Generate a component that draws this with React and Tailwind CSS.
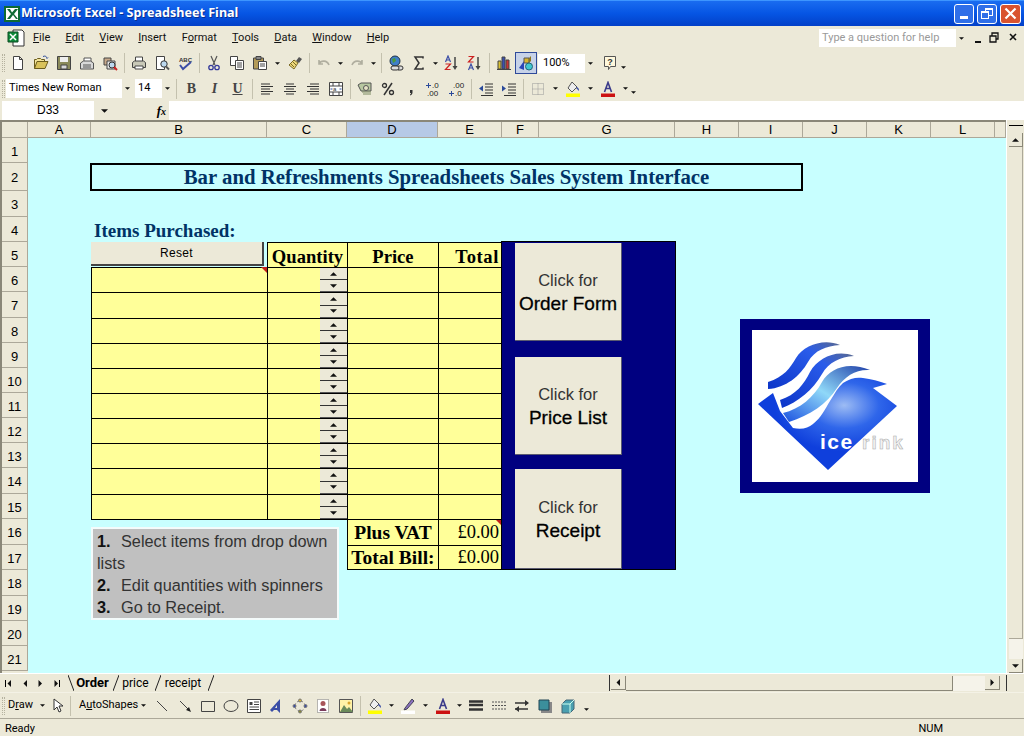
import React from 'react';

const COLS = ['A', 'B', 'C', 'D', 'E', 'F', 'G', 'H', 'I', 'J', 'K', 'L', ''];
const ROWS = Array.from({ length: 21 }, (_, i) => i + 1);
const ITEM_ROWS = [0, 1, 2, 3, 4, 5, 6, 7, 8, 9];

// small toolbar drawings, all on a 16x16 box
const ICONS = {
  new: <path d="M3.5 1.5h6l3 3v10h-9z M9.5 1.5v3h3" fill="#fff" stroke="#444" />,
  open: <><path d="M1.5 13.5v-9h2l1-1h3l1 1h3v2" fill="#f3e59a" stroke="#6b5c1c" /><path d="M1.5 13.5l2.5-7h11l-3 7z" fill="#d9c25a" stroke="#6b5c1c" /><path d="M10 1.5c2-1 4 0 4 2l1-1" fill="none" stroke="#2b4a9a" /></>,
  save: <><path d="M1.5 1.5h13v13h-13z" fill="#8a8a5a" stroke="#444" /><path d="M4 2h8v5H4z" fill="#eee" /><path d="M5 10h6v4H5z" fill="#d8d8d8" stroke="#444" /></>,
  perm: <><path d="M5 7V3h7v4" fill="#fff" stroke="#555" /><path d="M1.5 8l3-2h7l3 2v6h-13z" fill="#d9d9d9" stroke="#555" /><path d="M4 10h8M4 12h8" stroke="#555" /></>,
  mail: <><path d="M2 3h7v7H2z" fill="#c6a88a" stroke="#444" /><path d="M5 6h8v8H5z" fill="#e6e6e6" stroke="#444" /><circle cx="10" cy="10" r="3" fill="#bcd8ee" stroke="#333" /><path d="M12 12l3 3" stroke="#c22" strokeWidth="2" /></>,
  print: <><path d="M4.5 6V2h7v4" fill="#fff" stroke="#444" /><path d="M1.5 7.5l2-1.5h9l2 1.5v5h-13z" fill="#c9c9b8" stroke="#444" /><path d="M4 11h8v3H4z" fill="#fff" stroke="#444" /></>,
  preview: <><path d="M2.5 1.5h8v13h-8z" fill="#fff" stroke="#444" /><circle cx="10" cy="9" r="3.2" fill="#bcd8ee" stroke="#333" /><path d="M12 11.5l3 3" stroke="#555" strokeWidth="2" /></>,
  spell: <><text x="2" y="6.5" fontSize="6" fontWeight="bold" fill="#333" fontFamily="Liberation Sans">ABC</text><path d="M3 10l3 4 8-7" fill="none" stroke="#3b4ea6" strokeWidth="2" /></>,
  cut: <><path d="M5 1l4 9M11 1L7 10" stroke="#555" strokeWidth="1.2" /><circle cx="5" cy="12.5" r="2.2" fill="none" stroke="#33399a" strokeWidth="1.3" /><circle cx="11" cy="12.5" r="2.2" fill="none" stroke="#33399a" strokeWidth="1.3" /></>,
  copy: <><path d="M1.5 1.5h7v9h-7z" fill="#fff" stroke="#444" /><path d="M6.5 5.5h8v9h-8z" fill="#fff" stroke="#444" /><path d="M8 8h5M8 10h5M8 12h5" stroke="#444" /></>,
  paste: <><path d="M1.5 3h10v11h-10z" fill="#b49b58" stroke="#444" /><path d="M4 1.5h5v3H4z" fill="#888" stroke="#444" /><path d="M6.5 6.5h8v8h-8z" fill="#fff" stroke="#444" /><path d="M8 9h5M8 11h5" stroke="#444" /></>,
  painter: <><path d="M9 6l3-4 3 2-3 4z" fill="#555" /><path d="M2 10l5-5 4 3-4 6z" fill="#eed97c" stroke="#7a6a25" /><path d="M4 9l3 3M6 7l3 3" stroke="#7a6a25" /></>,
  undo: <path d="M3 5v4h4M3 9c2-4 8-4 10 1" fill="none" stroke="#b0ae9f" strokeWidth="1.6" />,
  redo: <path d="M13 5v4H9M13 9c-2-4-8-4-10 1" fill="none" stroke="#b0ae9f" strokeWidth="1.6" />,
  link: <><circle cx="7" cy="6" r="5" fill="#3f7fc8" stroke="#234" /><path d="M4 4l3-1 1 3-3 2z" fill="#4a9a3c" /><path d="M5 11h4a2 2 0 010 4H5a2 2 0 010-4zM10 11h3a2 2 0 010 4h-3" fill="#ddd" stroke="#333" /></>,
  sigma: <path d="M12 3.5V2H4l4 6-4 6h8v-1.5" fill="none" stroke="#333" strokeWidth="1.5" />,
  az: <><path d="M1.5 7l2.5-6 2.5 6M2.5 5h3" fill="none" stroke="#3b4ea6" strokeWidth="1.2" /><path d="M1.5 9h5l-5 5.5h5" fill="none" stroke="#c22" strokeWidth="1.2" /><path d="M11 2v10" stroke="#444" strokeWidth="1.5" /><path d="M8.5 11h5l-2.5 4z" fill="#444" /></>,
  za: <><path d="M1.5 1.5h5l-5 5.5h5" fill="none" stroke="#c22" strokeWidth="1.2" /><path d="M1.5 15l2.5-6 2.5 6M2.5 13h3" fill="none" stroke="#3b4ea6" strokeWidth="1.2" /><path d="M11 2v10" stroke="#444" strokeWidth="1.5" /><path d="M8.5 11h5l-2.5 4z" fill="#444" /></>,
  chart: <><path d="M2 6h3v8H2z" fill="#d9c234" stroke="#444" /><path d="M6 2h3v12H6z" fill="#3a4fb0" stroke="#444" /><path d="M10 5h3v9h-3z" fill="#c33" stroke="#444" /><path d="M1 14.5h14" stroke="#444" /></>,
  drawing: <><path d="M1 13l5-7v9z" fill="#2a46b8" /><path d="M6 3h5v5H6z" fill="#d9b52c" stroke="#555" /><path d="M11 3l2-2v5l-2 2z" fill="#8a7420" /><circle cx="11" cy="11.5" r="3.5" fill="#40c8d0" stroke="#267" /></>,
  help: <><path d="M2.5 1.5h11v10h-5l-2 3v-3h-4z" fill="#fff8dc" stroke="#555" /><text x="5.2" y="9.5" fontSize="9" fontWeight="bold" fill="#333" fontFamily="Liberation Sans">?</text></>,
  left: <path d="M2 3h9M2 5.500h12M2 8h9M2 10.500h12M2 13h9" stroke="#333" />,
  center: <path d="M4 3h8M2 5.500h12M4 8h8M2 10.500h12M4 13h8" stroke="#333" />,
  right: <path d="M5 3h9M2 5.500h12M5 8h9M2 10.500h12M5 13h9" stroke="#333" />,
  merge: <><path d="M1.5 1.5h13v13h-13zM1.5 5h13M1.5 11h13M5 1.5V5M11 1.5V5M5 11v3.5M11 11v3.5" fill="#fff" stroke="#444" /><text x="5" y="10.3" fontSize="6" fill="#333" fontFamily="Liberation Sans">a</text><path d="M2.5 8h2M11.5 8h2" stroke="#2b4a9a" /></>,
  currency: <><path d="M1 4l3-2h10v8H4z" fill="#b7c7a0" stroke="#555" /><circle cx="9" cy="7" r="2.5" fill="#e5e2c5" stroke="#555" /><path d="M5 11h9M6 13h8" stroke="#7a8a60" /></>,
  percent: <><circle cx="4.5" cy="4.5" r="2" fill="none" stroke="#333" strokeWidth="1.3" /><circle cx="11.5" cy="11.5" r="2" fill="none" stroke="#333" strokeWidth="1.3" /><path d="M12 2L4 14" stroke="#333" strokeWidth="1.5" /></>,
  comma: <path d="M7 9h2.5v2.5c0 1.5-1 2.5-2.5 3v-1c.6-.3 1-.8 1-1.5H7z" fill="#333" />,
  inc: <><path d="M0 4.500h5M2.500 2v5" stroke="#2b4a9a" /><text x="6" y="7" fontSize="8" fill="#222" fontFamily="Liberation Sans">.0</text><text x="1" y="15" fontSize="8" fill="#222" fontFamily="Liberation Sans">.00</text></>,
  dec: <><text x="4" y="7" fontSize="8" fill="#222" fontFamily="Liberation Sans">.00</text><path d="M0 12.500h5M2.500 10v5" stroke="#2b4a9a" /><text x="6" y="15" fontSize="8" fill="#222" fontFamily="Liberation Sans">.0</text></>,
  outdent: <><path d="M7 3h8M7 6h8M7 9h8M7 12h8M3 14.5h12" stroke="#333" /><path d="M1 7.5l4-3v6z" fill="#2b4a9a" /></>,
  indent: <><path d="M7 3h8M7 6h8M7 9h8M7 12h8M3 14.5h12" stroke="#333" /><path d="M5 7.5l-4-3v6z" fill="#2b4a9a" /></>,
  borders: <path d="M2.5 2.5h11v11h-11zM8 2.5v11M2.5 8h11" fill="none" stroke="#999" strokeDasharray="1 1" />,
  fill: <><path d="M7 1l5 5-5 5-4-4z" fill="#eee" stroke="#555" /><path d="M12 6c2 1 2 3 2 4-1-1-2-2-3-3z" fill="#3b4ea6" /><path d="M1 12.5h14V16H1z" fill="#ffff00" /></>,
  pen: <><path d="M5 10l7-9 2 2-7 8-3 1z" fill="#8a70c0" stroke="#445" /><path d="M1 12.5h14V16H1z" fill="#fff" /></>,
  color: <><path d="M4.5 11L8 1.5 11.5 11M6 7.5h4" fill="none" stroke="#3b3b8a" strokeWidth="1.6" /><path d="M1 12.5h14V16H1z" fill="#cc1111" /></>,
  line: <path d="M3 3l10 10" stroke="#444" />,
  arrow: <><path d="M3 3l9 9" stroke="#444" /><path d="M14 14l-5-2 3-3z" fill="#222" /></>,
  rect: <path d="M1.5 3.5h13v10h-13z" fill="none" stroke="#444" />,
  oval: <ellipse cx="8" cy="8" rx="7" ry="5.5" fill="none" stroke="#444" />,
  textbox: <><path d="M1.5 1.5h13v13h-13z" fill="#fff" stroke="#444" /><path d="M3.5 4h3v3h-3z" fill="#444" /><path d="M8 4h5M8 6.5h5M3.5 9h9.5M3.5 11.5h9.5" stroke="#444" /></>,
  wordart: <path d="M1 12L11 1v14L8 12H5l-2 2zM6 10h2V7z" fill="#3b4ea6" fillRule="evenodd" />,
  diagram: <g fill="none" stroke="#777"><circle cx="8" cy="8" r="5" strokeDasharray="2 2" /><circle cx="8" cy="2.5" r="1.5" fill="#d9b52c" /><circle cx="13.5" cy="8" r="1.5" fill="#3b4ea6" /><circle cx="8" cy="13.5" r="1.5" fill="#883" /><circle cx="2.5" cy="8" r="1.5" fill="#3b4ea6" /></g>,
  clipart: <><path d="M2.5 1.5h11v13h-11z" fill="#fff" stroke="#777" strokeDasharray="1 1" /><circle cx="8" cy="5.5" r="2.5" fill="#a8555a" /><path d="M4.5 13c0-4 7-4 7 0z" fill="#7a3a5a" /></>,
  picture: <><path d="M1.5 1.5h13v13h-13z" fill="#fff2a8" stroke="#555" /><circle cx="11" cy="5" r="1.5" fill="#d9a52c" /><path d="M2 14l4-7 3 4 2-2 4 5z" fill="#6a8a5a" /></>,
  lineStyle: <path d="M1 3.5h14M1 7h14M1 11.5h14" stroke="#333" strokeWidth="2.5" />,
  dash: <path d="M1 4h14M1 7.5h14M1 11h14" stroke="#555" strokeDasharray="2 1" />,
  arrows: <><path d="M1 5h13M1 11h13" stroke="#333" strokeWidth="1.4" /><path d="M15 5l-4-3v6zM1 11l4-3v6z" fill="#333" /></>,
  shadow: <><path d="M4 4h11v11H4z" fill="#888" /><path d="M2 2h10v10H2z" fill="#3b8f9c" stroke="#245" /></>,
  cube: <><path d="M2 6l4-4h8v9l-4 4H2z" fill="#4aa0b0" stroke="#467" /><path d="M2 6h8v9M10 6l4-4" fill="none" stroke="#cfe" /></>,
};

const STANDARD = ['new', 'open', 'save', 'perm', 'mail', '|', 'print', 'preview', 'spell', '|', 'cut', 'copy', 'paste', 'v', 'painter', '|', 'undo', 'V', 'redo', 'V', '|', 'link', 'sigma', 'V', 'az', 'za', '|', 'chart'];
const FORMATTING_A = ['left', 'center', 'right', 'merge', '|', 'currency', 'percent', 'comma', 'inc', 'dec', '|', 'outdent', 'indent', '|', 'borders', 'v', 'fill', 'v', 'color', 'v'];
const DRAWING_A = ['line', 'arrow', 'rect', 'oval', 'textbox', 'wordart', 'diagram', 'clipart', 'picture', '|', 'fill', 'V', 'pen', 'v', 'color', 'V', 'lineStyle', 'dash', 'arrows', 'shadow', 'cube'];

const Arrow = ({ dir = 'down', size = 5 }) => {
  const side = dir === 'left' || dir === 'right';
  const points = { down: '0,0 6,0 3,3', up: '0,3 6,3 3,0', left: '3,0 3,6 0,3', right: '0,0 0,6 3,3' }[dir];
  return (
    <svg width={side ? size / 2 + 1 : size} height={side ? size : size / 2 + 0.5} viewBox={side ? '0 0 3 6' : '0 0 6 3'} className="block">
      <polygon points={points} fill="#111" />
    </svg>
  );
};

const Grip = () => <div className="w-[3px] h-[18px] ml-[2px] shrink-0 border-x border-dotted border-[#b5b29f]" />;

const Sep = () => (
  <div className="w-[6px] h-[20px] flex justify-center shrink-0">
    <div className="w-px h-full bg-[#c4c1ae]" />
  </div>
);

const Drop = ({ narrow }) => (
  <div className={`flex justify-center shrink-0 ${narrow ? 'w-[10px]' : 'w-[12px]'}`}>
    <Arrow />
  </div>
);

const Tool = ({ name }) => (
  <div className="w-[23px] flex justify-center shrink-0">
    <svg width="16" height="16" viewBox="0 0 16 16" className="block">{ICONS[name]}</svg>
  </div>
);

const ToolList = ({ items }) =>
  items.map((item, i) => {
    if (item === '|') return <Sep key={i} />;
    if (item === 'v') return <Drop key={i} />;
    if (item === 'V') return <Drop key={i} narrow />;
    return <Tool key={i} name={item} />;
  });

const ComboBox = ({ label, className }) => (
  <div className={`h-[19px] bg-white flex items-center shrink-0 ${className}`}>
    <span className="flex-1 pl-[3px] text-[11px] font-['Roboto',sans-serif] whitespace-nowrap">{label}</span>
    <div className="w-[10px] h-full bg-[#ece9d8] flex items-center justify-center">
      <Arrow />
    </div>
  </div>
);

const MENU = [
  ['F', 'ile'], ['E', 'dit'], ['V', 'iew'], ['I', 'nsert'], ['F', 'ormat', 1], ['T', 'ools'], ['D', 'ata'], ['W', 'indow'], ['H', 'elp'],
];

const TitleBar = () => (
  <div className="h-[26px] shrink-0 flex items-center bg-gradient-to-b from-[#1a6cf0] via-[#0655e4] to-[#0340c8] border-t border-[#3d95ff]">
    <svg width="16" height="16" viewBox="0 0 16 16" className="ml-[4px] shrink-0">
      <path d="M0 0h16v16H0z" fill="#0e6a34" />
      <path d="M2 2h12v12H2z" fill="#fff" />
      <path d="M3 3l4 5-4 5h3l3-4 3 4h2L10 8l4-5h-3L8 6.500 6 3z" fill="#0e6a34" />
    </svg>
    <span className="ml-[1px] text-white text-[12.6px] font-bold font-['Noto_Sans',sans-serif] whitespace-nowrap [text-shadow:1px_1px_0_#0a2f8f]">
      Microsoft Excel - Spreadsheet Final
    </span>
    <div className="ml-auto mr-[3px] flex gap-[3px]">
      <div className="w-[20px] h-[20px] rounded-[3px] border border-white bg-[#2f6fe8] flex items-end pl-[5px] pb-[4px]">
        <div className="w-[8px] h-[3px] bg-white" />
      </div>
      <div className="w-[20px] h-[20px] rounded-[3px] border border-white bg-[#2f6fe8] relative">
        <div className="absolute left-[7px] top-[3px] w-[8px] h-[8px] border border-white border-t-2" />
        <div className="absolute left-[3px] top-[6px] w-[8px] h-[8px] border border-white border-t-2 bg-[#2f6fe8]" />
      </div>
      <div className="w-[21px] h-[20px] rounded-[3px] border border-white bg-[#d9532f] flex items-center justify-center">
        <svg width="13" height="13" viewBox="0 0 13 13"><path d="M1.500 1.500l10 10M11.500 1.500l-10 10" stroke="#fff" strokeWidth="2.200" /></svg>
      </div>
    </div>
  </div>
);

const MenuBar = () => (
  <div className="h-[24px] shrink-0 flex items-center font-['Roboto',sans-serif] text-[11px] text-[#111]">
    <svg width="18" height="18" viewBox="0 0 18 18" className="ml-[7px] mr-[8px] shrink-0">
      <path d="M6 1h9l2 2v14H6z" fill="#fff" stroke="#333" />
      <path d="M1 3h10v10H1z" fill="#0e8a3a" stroke="#0a4a20" />
      <path d="M3 5l6 6M9 5l-6 6" stroke="#fff" strokeWidth="1.500" />
    </svg>
    <div className="flex gap-[15.200px]">
      {MENU.map(([key, rest, second]) =>
        second ? (
          <span key={rest}>F<u>o</u>rmat</span>
        ) : (
          <span key={rest}><u>{key}</u>{rest}</span>
        ),
      )}
    </div>
    <div className="ml-auto flex items-center">
      <div className="w-[148px] h-[18px] bg-white flex items-center">
        <span className="flex-1 pl-[3px] text-[#9a9a9a] whitespace-nowrap">Type a question for help</span>
        <div className="w-[11px] h-full flex items-center justify-center bg-[#ece9d8]"><Arrow /></div>
      </div>
      <div className="w-[8px]" />
      <svg width="46" height="14" viewBox="0 0 46 14" className="mr-[3px]">
        <path d="M0 10h6v2H0z" fill="#111" />
        <path d="M15 5h6v6h-6zM17 5V2h6v6h-2" fill="none" stroke="#111" strokeWidth="1.300" />
        <path d="M35 3l6 6M41 3l-6 6" stroke="#111" strokeWidth="1.600" />
      </svg>
    </div>
  </div>
);

const StandardBar = () => (
  <div className="h-[26px] shrink-0 flex items-center">
    <Grip />
    <div className="w-[1px]" />
    <ToolList items={STANDARD} />
    <div className="w-[22px] h-[22px] flex items-center justify-center border border-[#2f4a9a] bg-[#c7d2e8] shrink-0">
      <svg width="16" height="16" viewBox="0 0 16 16">{ICONS.drawing}</svg>
    </div>
    <ComboBox label="100%" className="w-[57px] ml-[1px] pl-[2px]" />
    <div className="w-[3px]" />
    <Tool name="help" />
    <div className="mt-[8px]"><Arrow /></div>
  </div>
);

const FormatBar = () => (
  <div className="h-[25px] shrink-0 flex items-center">
    <Grip />
    <ComboBox label="Times New Roman" className="w-[126px] ml-[1px]" />
    <div className="w-[3px]" />
    <ComboBox label="14" className="w-[37px]" />
    <div className="w-[1px]" />
    <Sep />
    <div className="w-[1px]" />
    <div className="w-[23px] text-center font-bold font-['Liberation_Serif',serif] text-[14px] text-[#444]">B</div>
    <div className="w-[23px] text-center italic font-bold font-['Liberation_Serif',serif] text-[14px] text-[#444]">I</div>
    <div className="w-[23px] text-center underline font-bold font-['Liberation_Serif',serif] text-[14px] text-[#444]">U</div>
    <Sep />
    <ToolList items={FORMATTING_A} />
    <div className="mt-[8px]"><Arrow /></div>
  </div>
);

const FormulaBar = () => (
  <div className="h-[19px] shrink-0 flex">
    <div className="w-[92px] ml-[2px] bg-white text-center text-[12px] leading-[19px]">D33</div>
    <div className="w-[20px] flex items-center justify-center"><Arrow size={7} /></div>
    <div className="w-[55px] flex items-center justify-end pr-[2px] font-['Liberation_Serif',serif] italic font-bold text-[13px]">
      <span className="pr-[1px]">f<span className="text-[10px]">x</span></span>
    </div>
    <div className="flex-1 bg-white" />
  </div>
);

const HeaderCell = ({ children, active }) => (
  <div className={`flex items-center justify-center text-[13px] border-r border-b border-[#aca899] min-w-0 ${active ? 'bg-[#b6c9e6]' : 'bg-[#ece9d8]'}`}>
    {children}
  </div>
);

const Spinner = () => (
  <div className="w-[27px] h-full flex flex-col">
    <div className="flex-1 bg-[#ece9d8] border-b border-[#333] flex items-center justify-center"><Arrow dir="up" size={7} /></div>
    <div className="flex-1 bg-[#ece9d8] border-b border-[#555] flex items-center justify-center"><Arrow size={7} /></div>
  </div>
);

const Corner = ({ className }) => (
  <svg width="6" height="6" viewBox="0 0 6 6" className={`absolute ${className}`}>
    <polygon points="0,0 6,0 6,6" fill="#c0201a" />
  </svg>
);

const ItemRows = () => (
  <div className="col-start-3 col-span-4 row-start-7 row-span-10 relative z-10 grid grid-cols-[176px_80px_91px_64px] grid-rows-[25px_26px_25px_25px_25px_25px_25px_25px_26px_25px] bg-[#ffff99] font-['Liberation_Serif',serif] -mb-px border-b border-black box-content h-[252px]">
    {ITEM_ROWS.map((row) => (
      <React.Fragment key={row}>
        <div className="border-l border-t border-black" />
        <div className="border-l border-t border-black flex justify-end"><Spinner /></div>
        <div className="border-l border-t border-black" />
        <div className="border-l border-t border-black" />
      </React.Fragment>
    ))}
    <Corner className="left-[170px] top-0" />
  </div>
);

const Logo = () => (
  <div className="col-start-10 col-span-3 row-start-9 row-span-7 flex items-center justify-center">
    <div className="w-[190px] h-[174px] bg-[#000080] flex items-center justify-center">
      <svg width="166" height="152" viewBox="0 0 166 152" className="block bg-white">
        <defs>
          <radialGradient id="body" cx="0.62" cy="0.3" r="0.5">
            <stop offset="0" stopColor="#9dbcf4" />
            <stop offset="0.5" stopColor="#2f66ea" />
            <stop offset="1" stopColor="#0f3fdc" />
          </radialGradient>
          <linearGradient id="band" x1="0" y1="1" x2="1" y2="0">
            <stop offset="0" stopColor="#0c35c8" />
            <stop offset="0.7" stopColor="#2a5cea" />
            <stop offset="1" stopColor="#5a6a90" />
          </linearGradient>
          <linearGradient id="band3" x1="0" y1="1" x2="1" y2="0">
            <stop offset="0" stopColor="#1a50e0" />
            <stop offset="0.5" stopColor="#8fd8f8" />
            <stop offset="1" stopColor="#1f3fa8" />
          </linearGradient>
        </defs>
        <path d="M6 74L21 63l7 18 13 17c9 2 15 0 20-4 8-6 12-15 17-23 5-8 8-14 13-18 7-5 14-6 20-5 8 1 16 3 24 6l-14 4 24 18-69 64z" fill="url(#body)" />
        <path d="M16 52c16-5 22-14 28-24C52 15 72 8 88 15 74 16 63 20 56 32 48 46 34 58 16 59z" fill="url(#band)" />
        <path d="M28 70c16-5 24-16 30-28C66 28 84 19 102 26 88 27 77 32 70 44 61 60 46 72 30 78z" fill="url(#band)" />
        <path d="M31 83c17-4 31-16 39-31C78 38 96 31 118 40 104 39 93 46 85 58 75 74 58 85 37 92z" fill="url(#band3)" />
        <text x="68" y="119" fontFamily="Liberation Sans" fontSize="21" fontWeight="bold" letterSpacing="1.500" fill="#fff">ice</text>
        <text x="110" y="119" fontFamily="Liberation Sans" fontSize="19" fontWeight="bold" letterSpacing="2" fill="#f2f2f2" stroke="#aaa" strokeWidth="0.500">rink</text>
      </svg>
    </div>
  </div>
);

const PanelButton = ({ big, className }) => (
  <div className={`w-[107px] ml-[13px] bg-[#ece9d8] border-r border-b border-[#5a5a70] flex flex-col items-center justify-center gap-[2px] pt-[3px] text-black ${className}`}>
    <span className="text-[16.5px] leading-[20px] text-[#333]">Click for</span>
    <span className="text-[19px] leading-[24px] font-medium [-webkit-text-stroke:0.3px_black]">{big}</span>
  </div>
);

const Sheet = () => (
  <div className="grid grid-cols-[26px_63px_176px_80px_91px_64px_37px_136px_64px_64px_64px_64px_64px_11px] grid-rows-[16px_25px_28px_26px_25px_25px_25px_26px_25px_25px_25px_25px_25px_25px_26px_25px_26px_25px_26px_25px_25px_25px_2px] bg-[#c8ffff] w-[1006px] border-t-2 border-l-2 border-[#8a8778] box-border overflow-hidden">
    <div className="col-start-1 row-start-1 bg-[#ece9d8] border-r border-b border-[#aca899]" />
    {COLS.map((col) => (
      <HeaderCell key={col} active={col === 'D'}>{col}</HeaderCell>
    ))}
    {ROWS.map((row) => (
      <div key={row} className="col-start-1 flex items-center justify-center pt-[3px] text-[13px] bg-[#ece9d8] border-r border-b border-[#aca899]">
        {row}
      </div>
    ))}
    <div className="col-start-1 bg-[#ece9d8]" />

    <div className="col-start-3 col-span-8 row-start-3 border-2 border-black -ml-px flex items-center justify-center font-['Liberation_Serif',serif] font-bold text-[20.8px] text-[#003366] whitespace-nowrap">
      Bar and Refreshments Spreadsheets Sales System Interface
    </div>
    <div className="col-start-3 col-span-3 row-start-5 flex items-center pl-[3px] pt-[3px] font-['Liberation_Serif',serif] font-bold text-[19px] text-[#003366] whitespace-nowrap">
      Items Purchased:
    </div>

    <div className="col-start-3 row-start-6 mr-[3px] mb-[1px] bg-[#ece9d8] border-r-2 border-b-2 border-[#444] text-[12px] text-center leading-[22px] tracking-[0.3px]">
      Reset
    </div>

    <div className="col-start-4 col-span-3 row-start-6 grid grid-cols-[80px_91px_64px] bg-[#ffff99] border-t border-black font-['Liberation_Serif',serif] font-bold text-[18.6px] text-black">
      <div className="border-l border-black flex items-center justify-center">Quantity</div>
      <div className="border-l border-black flex items-center justify-center">Price</div>
      <div className="border-l border-black flex items-center justify-end pr-[3px] tracking-[0.6px]">Total</div>
    </div>

    <ItemRows />

    <div className="col-start-5 col-span-2 row-start-17 row-span-2 relative z-20 grid grid-cols-[91px_64px] grid-rows-2 bg-[#ffff99] border-t border-b border-black font-['Liberation_Serif',serif] text-[18.5px] text-black">
      <div className="border-l border-black flex items-center justify-center pt-[1px] font-bold text-[19.5px]">Plus VAT</div>
      <div className="border-l border-black flex items-center justify-end pt-[2px] pr-[3px]">£0.00</div>
      <div className="border-l border-t border-black flex items-center justify-center pt-[1px] font-bold text-[19.5px]">Total Bill:</div>
      <div className="border-l border-t border-black flex items-center justify-end pt-[2px] pr-[3px]">£0.00</div>
      <Corner className="right-0 top-0" />
    </div>

    <div className="col-start-3 col-span-2 row-start-17 row-span-4 mt-[8px] mb-[1px] mr-[8px] bg-[#c0c0c0] border-2 border-[#f4fbfb] pl-[4px] pt-[1px] text-[16.3px] leading-[22px] text-[#333]">
      <p><b className="text-[#111] inline-block w-[24px]">1.</b><span>Select items from drop down</span></p>
      <p>lists</p>
      <p><b className="text-[#111] inline-block w-[24px]">2.</b><span>Edit quantities with spinners</span></p>
      <p><b className="text-[#111] inline-block w-[24px]">3.</b><span>Go to Receipt.</span></p>
    </div>

    <div className="col-start-7 col-span-2 row-start-6 row-span-13 relative z-30 bg-[#000080] border border-black -ml-px -mr-px -mt-px flex flex-col">
      <PanelButton big="Order Form" className="h-[99px] mt-px" />
      <PanelButton big="Price List" className="h-[99px] mt-[16px]" />
      <PanelButton big="Receipt" className="h-[101px] mt-[14px]" />
    </div>

    <Logo />
  </div>
);

const ScrollButton = ({ dir, wide }) => (
  <div className={`h-[14px] bg-[#ece9d8] border-r border-b border-[#8a8778] flex items-center justify-center shrink-0 ${wide ? 'w-[15px]' : 'w-[14px]'}`}>
    <Arrow dir={dir} size={7} />
  </div>
);

const VScroll = () => (
  <div className="w-[18px] flex flex-col items-center border-l border-white">
    <div className="h-[5px] w-[14px] mt-[5px] border-t border-black" />
    <div className="h-[3px]" />
    <ScrollButton dir="up" />
    <div className="w-[14px] h-[492px] bg-[#ece9d8] border-r border-b border-[#aca899]" />
    <div className="w-[14px] flex-1 bg-[#f5f3ea]" />
    <ScrollButton dir="down" />
  </div>
);

const TabNav = ({ dir, bar }) => (
  <div className="flex items-center gap-px">
    {bar === 'left' && <div className="w-px h-[7px] bg-black" />}
    <Arrow dir={dir} size={7} />
    {bar === 'right' && <div className="w-px h-[7px] bg-black" />}
  </div>
);

const TabBar = () => (
  <div className="h-[19px] shrink-0 flex items-center border-t border-white">
    <div className="w-[68px] flex items-center gap-[11px] pl-[5px]">
      <TabNav dir="left" bar="left" />
      <TabNav dir="left" />
      <TabNav dir="right" />
      <TabNav dir="right" bar="right" />
    </div>
    <svg width="6" height="16" viewBox="0 0 6 16"><path d="M0 0l6 16" stroke="#222" /></svg>
    <span className="w-[39px] text-[13px] font-bold font-['Roboto',sans-serif] text-center pr-[2px]">Order</span>
    <svg width="6" height="16" viewBox="0 0 6 16"><path d="M6 0L0 16" stroke="#222" /></svg>
    <span className="w-[36px] text-[12px] font-['Roboto',sans-serif] text-center pr-[3px]">price</span>
    <svg width="6" height="16" viewBox="0 0 6 16"><path d="M6 0L0 16" stroke="#222" /></svg>
    <span className="w-[47px] text-[12px] font-['Roboto',sans-serif] text-center pr-[3px]">receipt</span>
    <svg width="6" height="16" viewBox="0 0 6 16"><path d="M6 0L0 16" stroke="#222" /></svg>
    <div className="w-[395px]" />
    <div className="w-[1px] h-[16px] bg-[#333]" />
    <div className="w-[1px]" />
    <ScrollButton dir="left" wide />
    <div className="w-[327px] h-[15px] bg-[#ece9d8] border-r border-b border-[#8a8778]" />
    <div className="w-[32px] h-[15px] bg-[#f5f3ea]" />
    <ScrollButton dir="right" wide />
    <div className="w-[1px] h-[16px] bg-[#333] ml-[6px]" />
  </div>
);

const DrawBar = () => (
  <div className="h-[26px] shrink-0 flex items-center text-[11px] font-['Roboto',sans-serif] border-t border-[#f4f2e6]">
    <Grip />
    <span className="ml-[3px] w-[30px]">D<u>r</u>aw</span>
    <div className="ml-[2px]"><Arrow /></div>
    <div className="w-[3px]" />
    <svg width="16" height="16" viewBox="0 0 16 16" className="ml-[2px] shrink-0">
      <path d="M4 1v11l3-3 2 5 2-1-2-5h4z" fill="#fff" stroke="#333" />
    </svg>
    <div className="w-[1px]" />
    <Sep />
    <span className="ml-[6px] w-[60px] whitespace-nowrap">A<u>u</u>toShapes</span>
    <div className="ml-[2px] mr-[4.500px]"><Arrow /></div>
    <ToolList items={DRAWING_A} />
    <div className="mt-[8px] ml-[4px]"><Arrow /></div>
  </div>
);

const StatusBar = () => (
  <div className="h-[18px] shrink-0 flex items-center pt-[4px] border-t border-[#aca899] text-[11px] font-['Roboto',sans-serif]">
    <span className="ml-[5px]">Ready</span>
    <span className="ml-auto mr-[81px]">NUM</span>
  </div>
);

export default function App() {
  return (
    <div className="w-[1024px] h-[736px] overflow-hidden flex flex-col bg-[#ece9d8] text-black font-['Liberation_Sans',sans-serif]">
      <TitleBar />
      <MenuBar />
      <StandardBar />
      <FormatBar />
      <FormulaBar />
      <div className="h-[553px] shrink-0 flex">
        <Sheet />
        <VScroll />
      </div>
      <TabBar />
      <DrawBar />
      <StatusBar />
    </div>
  );
}
